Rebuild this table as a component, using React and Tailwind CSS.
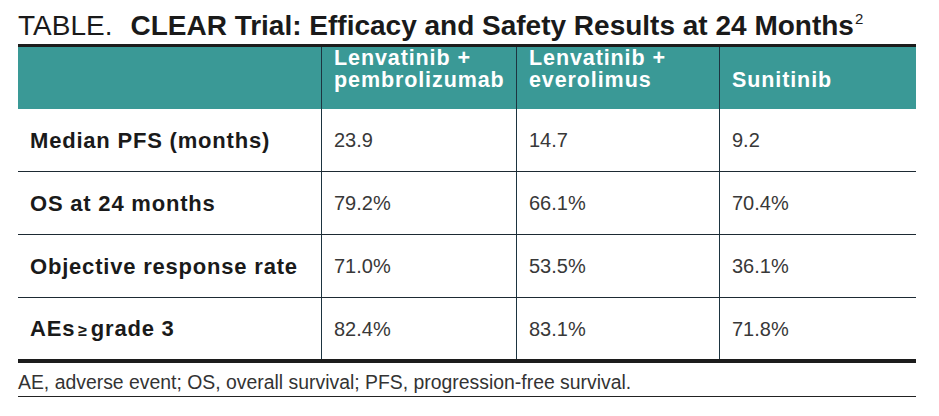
import React from 'react'

const cols = ['Lenvatinib + pembrolizumab', 'Lenvatinib + everolimus', 'Sunitinib']

const rows = [
  { label: 'Median PFS (months)', values: ['23.9', '14.7', '9.2'] },
  { label: 'OS at 24 months', values: ['79.2%', '66.1%', '70.4%'] },
  { label: 'Objective response rate', values: ['71.0%', '53.5%', '36.1%'] },
  { label: 'AEs ≥ grade 3', values: ['82.4%', '83.1%', '71.8%'], ae: true },
]

const grid = 'grid grid-cols-[303px_195px_203px_197px]'

export default function App() {
  return (
    <div className="w-[939px] h-[416px] bg-white font-['Liberation_Sans',Arial,sans-serif]">
      {/* Title */}
      <div className="h-[44px] pt-[4px] pl-[18px] leading-[30px] text-[#1a1a1a] whitespace-nowrap">
        <span className="text-[28px] font-normal">TABLE.</span>
        <span className="ml-[18px] text-[28px] font-bold tracking-[0px]">
          CLEAR Trial: Efficacy and Safety Results at 24 Months
        </span>
        <span className="text-[15px] align-[11px] ml-[1px]">2</span>
      </div>

      <div className="ml-[18px] w-[898px] border-t-[3px] border-[#1c1c1c]">
        {/* Header */}
        <div className={`${grid} h-[62px] bg-[#3a9996] text-white font-bold text-[21.5px] leading-[22px] tracking-[0.9px]`}>
          <div />
          {cols.map((c, i) => (
            <div key={i} className="border-l border-[#1d3440] flex items-end pl-[12px] pb-[22px]">
              {i < 2 ? (
                <span>
                  {c.split(' + ')[0]} +
                  <br />
                  {c.split(' + ')[1]}
                </span>
              ) : (
                <span>{c}</span>
              )}
            </div>
          ))}
        </div>

        {/* Body */}
        {rows.map((r, ri) => (
          <div
            key={ri}
            className={`${grid} ${ri < rows.length - 1 ? 'h-[63px] border-b border-[#1d2a33]' : 'h-[61px]'}`}
          >
            <div className="flex items-center pl-[12px] text-[22px] font-bold tracking-[0.8px] text-[#1a1a1a]">
              {r.ae ? (
                <span>
                  AEs<span className="text-[16px] mx-[3px]">≥</span>grade 3
                </span>
              ) : (
                r.label
              )}
            </div>
            {r.values.map((v, vi) => (
              <div key={vi} className="border-l border-[#1d3440] flex items-center pl-[12px] text-[20px] text-[#383838]">
                {v}
              </div>
            ))}
          </div>
        ))}

        {/* Footnote */}
        <div className="border-t-4 border-[#1c1c1c] h-[38px] pt-[8px] border-b border-b-[#222] text-[19.4px] leading-[22px] text-[#333] whitespace-nowrap">
          AE, adverse event; OS, overall survival; PFS, progression-free survival.
        </div>
      </div>
    </div>
  )
}
